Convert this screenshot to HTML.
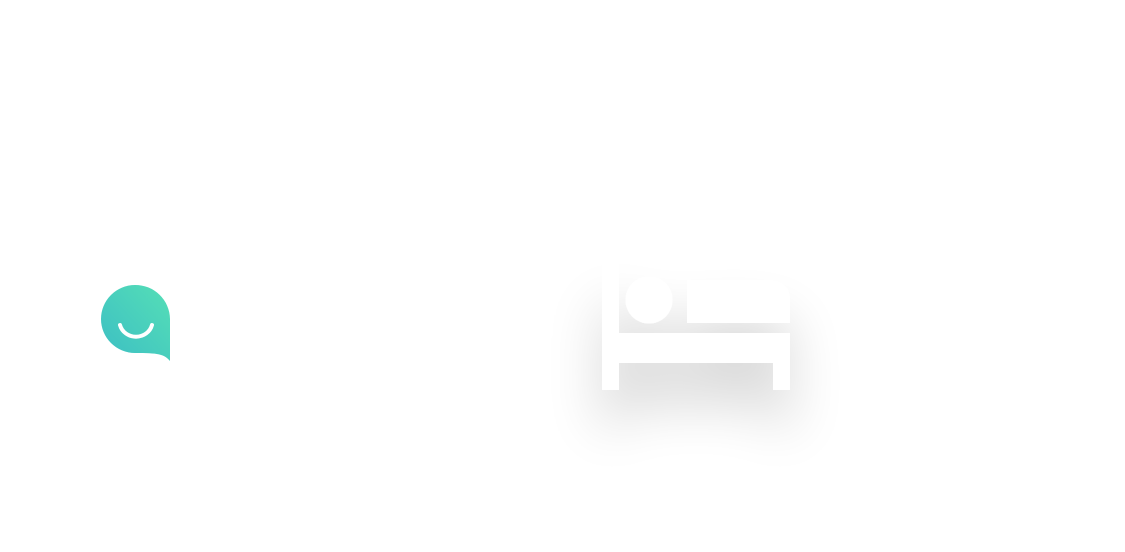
<!DOCTYPE html>
<html><head><style>
html,body{margin:0;padding:0;background:#fff;width:1125px;height:552px;overflow:hidden}
</style></head><body>
<svg width="1125" height="552" style="position:absolute;left:0;top:0">
<defs>
<linearGradient id="g" x1="1" y1="0" x2="0" y2="1">
<stop offset="0" stop-color="#55dfb6"/><stop offset="1" stop-color="#3cbec4"/>
</linearGradient>
<filter id="sh" x="-60%" y="-60%" width="220%" height="220%">
<feGaussianBlur in="SourceAlpha" stdDeviation="27"/>
<feOffset dy="40"/>
<feComponentTransfer><feFuncA type="linear" slope="0.18"/></feComponentTransfer>
<feMerge><feMergeNode/><feMergeNode in="SourceGraphic"/></feMerge>
</filter>
</defs>
<path d="M135,285 A34.5,34.5 0 0 1 170,319 L170,361 C164,354 158,353 135,353 A34,34 0 0 1 135,285 Z" fill="url(#g)"/>
<path d="M120,325 A16.5,15.5 0 0 0 152,325" fill="none" stroke="#fff" stroke-width="4" stroke-linecap="round"/>
<g filter="url(#sh)" fill="#fff">
<rect x="602" y="262" width="17" height="128"/>
<circle cx="649" cy="300" r="23.5"/>
<path d="M687,280 L770,280 Q790,282 790,300 L790,323 L687,323 Z"/>
<rect x="619" y="333" width="171" height="30"/>
<rect x="773" y="363" width="17" height="27"/>
</g>
</svg>
</body></html>
